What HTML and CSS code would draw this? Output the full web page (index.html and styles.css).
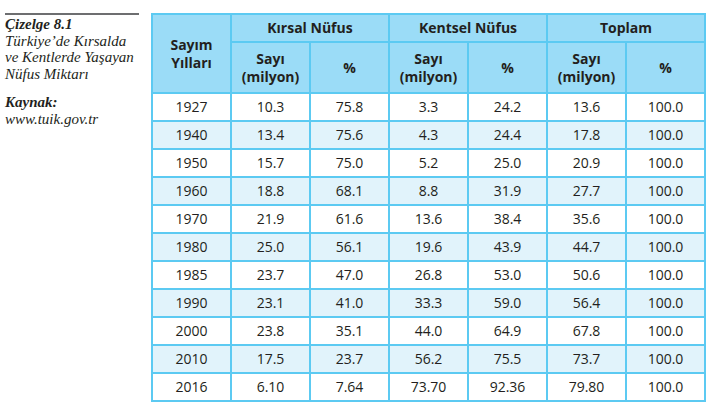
FILE: index.html
```html
<!DOCTYPE html>
<html lang="tr">
<head>
<meta charset="utf-8">
<link rel="stylesheet" href="styles.css">
</head>
<body>
<div class="page">
  <div class="caption">
    <div class="title"><b>Çizelge 8.1</b><br>Türkiye’de Kırsalda<br>ve Kentlerde Yaşayan<br>Nüfus Miktarı</div>
    <div class="source"><b>Kaynak:</b><br>www.tuik.gov.tr</div>
  </div>
  <table class="data">
    <colgroup><col><col><col><col><col><col><col></colgroup>
    <thead>
      <tr class="h1">
        <th rowspan="2">Sayım<br>Yılları</th>
        <th colspan="2">Kırsal Nüfus</th>
        <th colspan="2">Kentsel Nüfus</th>
        <th colspan="2">Toplam</th>
      </tr>
      <tr class="h2">
        <th>Sayı<br>(milyon)</th><th>%</th>
        <th>Sayı<br>(milyon)</th><th>%</th>
        <th>Sayı<br>(milyon)</th><th>%</th>
      </tr>
    </thead>
    <tbody>
      <tr><td>1927</td><td>10.3</td><td>75.8</td><td>3.3</td><td>24.2</td><td>13.6</td><td>100.0</td></tr>
      <tr><td>1940</td><td>13.4</td><td>75.6</td><td>4.3</td><td>24.4</td><td>17.8</td><td>100.0</td></tr>
      <tr><td>1950</td><td>15.7</td><td>75.0</td><td>5.2</td><td>25.0</td><td>20.9</td><td>100.0</td></tr>
      <tr><td>1960</td><td>18.8</td><td>68.1</td><td>8.8</td><td>31.9</td><td>27.7</td><td>100.0</td></tr>
      <tr><td>1970</td><td>21.9</td><td>61.6</td><td>13.6</td><td>38.4</td><td>35.6</td><td>100.0</td></tr>
      <tr><td>1980</td><td>25.0</td><td>56.1</td><td>19.6</td><td>43.9</td><td>44.7</td><td>100.0</td></tr>
      <tr><td>1985</td><td>23.7</td><td>47.0</td><td>26.8</td><td>53.0</td><td>50.6</td><td>100.0</td></tr>
      <tr><td>1990</td><td>23.1</td><td>41.0</td><td>33.3</td><td>59.0</td><td>56.4</td><td>100.0</td></tr>
      <tr><td>2000</td><td>23.8</td><td>35.1</td><td>44.0</td><td>64.9</td><td>67.8</td><td>100.0</td></tr>
      <tr><td>2010</td><td>17.5</td><td>23.7</td><td>56.2</td><td>75.5</td><td>73.7</td><td>100.0</td></tr>
      <tr><td>2016</td><td>6.10</td><td>7.64</td><td>73.70</td><td>92.36</td><td>79.80</td><td>100.0</td></tr>
    </tbody>
  </table>
</div>
</body>
</html>
```
FILE: styles.css
```css
html, body {
  margin: 0;
  padding: 0;
  background: #ffffff;
}
.page {
  display: flex;
  align-items: flex-start;
  gap: 12px;
  padding: 13px 0 0 5px;
}
.caption {
  width: 134px;
  border-top: 2px solid #6d6e70;
  padding-top: 1px;
  font-family: "Liberation Serif", serif;
  font-style: italic;
  font-size: 15px;
  line-height: 16.5px;
  color: #231f20;
  white-space: nowrap;
}
.caption b {
  font-weight: bold;
}
.source {
  margin-top: 12px;
}
.data {
  border-collapse: collapse;
  table-layout: fixed;
  width: 555px;
  border: 2px solid #5ccaf2;
  font-family: "Open Sans", sans-serif;
  font-size: 14px;
  color: #231f20;
}
.data th, .data td {
  border: 2px solid #5ccaf2;
  text-align: center;
  padding: 0;
}
.data th {
  background: #9bdcf7;
  font-weight: 700;
  line-height: 18px;
}
.data tr.h1 th {
  height: 26px;
}
.data tr.h2 th {
  height: 49px;
}
.data td {
  height: 26px;
  line-height: 18px;
}
.data tbody tr:nth-child(even) td {
  background: #e1f3fb;
}
```
